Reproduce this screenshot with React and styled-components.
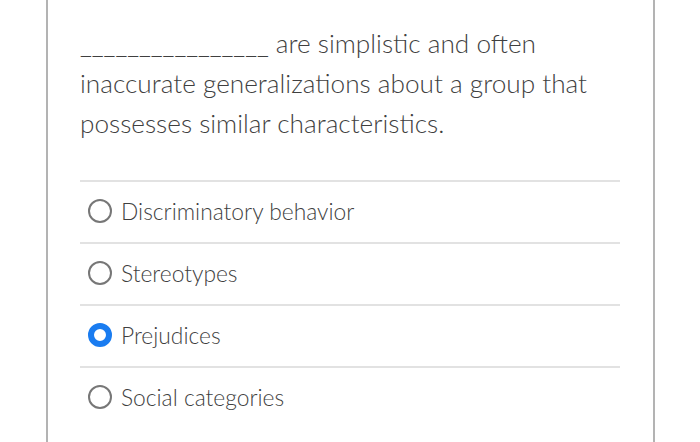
import React from "react"
import styled, { createGlobalStyle } from "styled-components"

const GlobalStyle = createGlobalStyle`
  html, body {
    margin: 0;
    padding: 0;
    background: #fff;
  }
  body {
    font-family: Lato, "Open Sans", sans-serif;
  }
`

const Page = styled.div`
  height: 442px;
  overflow: hidden;
  padding-left: 46px;
  width: 609px;
`

const Card = styled.div`
  box-sizing: border-box;
  height: 442px;
  border-left: 2px solid #b3b3b3;
  border-right: 2px solid #b3b3b3;
  padding: 23px 33px 0 32px;
`

const Question = styled.p`
  margin: 0 0 37px;
  font-size: 26.2px;
  font-weight: 300;
  line-height: 40px;
  color: #3f3f3f;
`

const Options = styled.div`
  display: flex;
  flex-direction: column;
`

const Option = styled.label`
  display: flex;
  align-items: center;
  gap: 9px;
  height: 58px;
  padding-bottom: 2px;
  border-top: 2px solid #e2e2e2;
  padding-left: 8px;
  font-size: 22.8px;
  font-weight: 300;
  color: #3f3f3f;
`

const Radio = styled.span`
  box-sizing: border-box;
  width: 24px;
  height: 24px;
  border-radius: 50%;
  flex: none;
  border: ${(p) => (p.checked ? "6px solid #1a7cf0" : "2px solid #777")};
  background: #fff;
`

const options = [
  { label: "Discriminatory behavior" },
  { label: "Stereotypes" },
  { label: "Prejudices", checked: true },
  { label: "Social categories" },
]

const App = () => (
  <Page>
    <GlobalStyle />
    <Card>
      <Question>
        ________________ are simplistic and often inaccurate generalizations
        about a group that possesses similar characteristics.
      </Question>
      <Options>
        {options.map((o) => (
          <Option key={o.label}>
            <Radio checked={o.checked} />
            {o.label}
          </Option>
        ))}
      </Options>
    </Card>
  </Page>
)

export default App
